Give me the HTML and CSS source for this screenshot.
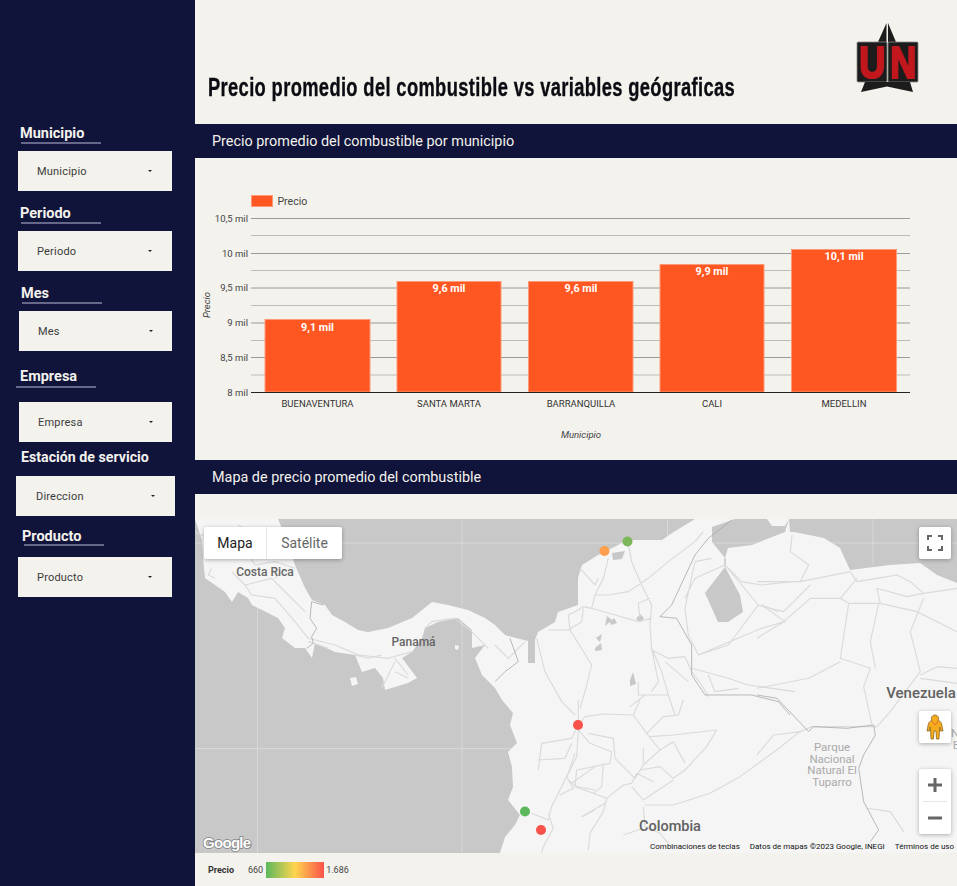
FILE: index.html
```html
<!DOCTYPE html>
<html lang="es">
<head>
<meta charset="utf-8">
<title>Precio promedio del combustible</title>
<link rel="stylesheet" href="styles.css">
</head>
<body>
<div class="page">
  <aside class="sidebar">
    <div class="filter f-municipio">
      <div class="f-label">Municipio</div><div class="f-rule"></div>
      <div class="f-select"><span>Municipio</span><i class="caret"></i></div>
    </div>
    <div class="filter f-periodo">
      <div class="f-label">Periodo</div><div class="f-rule"></div>
      <div class="f-select"><span>Periodo</span><i class="caret"></i></div>
    </div>
    <div class="filter f-mes">
      <div class="f-label">Mes</div><div class="f-rule"></div>
      <div class="f-select"><span>Mes</span><i class="caret"></i></div>
    </div>
    <div class="filter f-empresa">
      <div class="f-label">Empresa</div><div class="f-rule"></div>
      <div class="f-select"><span>Empresa</span><i class="caret"></i></div>
    </div>
    <div class="filter f-estacion">
      <div class="f-label">Estación de servicio</div>
      <div class="f-select"><span>Direccion</span><i class="caret"></i></div>
    </div>
    <div class="filter f-producto">
      <div class="f-label">Producto</div><div class="f-rule"></div>
      <div class="f-select"><span>Producto</span><i class="caret"></i></div>
    </div>
  </aside>
  <main class="main">
    <header class="head">
      <h1 class="title">Precio promedio del combustible vs variables geógraficas</h1>
      <svg class="logo" viewBox="0 0 66 74" width="66" height="74" aria-label="UN">
        <path class="logo-k" d="M30.500 1 L22 20 L30.500 20 Z M32 1 L40 20 L32 20 Z"/>
        <rect class="logo-box" x="1" y="20" width="30" height="40" rx="1"/>
        <rect class="logo-box" x="32" y="20" width="30" height="40" rx="1"/>
        <path class="logo-k" d="M9 60 L5 70 L31 64.500 L57 70 L54 60 Z"/>
        <text class="logo-t" x="3" y="55.500" textLength="26" lengthAdjust="spacingAndGlyphs">U</text>
        <text class="logo-t" x="34" y="55.500" textLength="26" lengthAdjust="spacingAndGlyphs">N</text>
      </svg>
    </header>
    <div class="bar">Precio promedio del combustible por municipio</div>
    <section class="chart">
      <svg class="chart-svg" viewBox="195 158 762 302" width="762" height="302">
        <rect class="bar-r" x="251.500" y="195.500" width="21" height="11"/>
        <text class="t-legend" x="277.500" y="205">Precio</text>
        <g class="grid-m">
          <path d="M251 235.500H910M251 270.500H910M251 305.500H910M251 340.500H910M251 375H910"/>
        </g>
        <g class="grid-j">
          <path d="M251 218.500H910M251 253.500H910M251 288H910M251 323H910M251 357.500H910"/>
        </g>
        <g class="t-tick">
          <text x="248" y="222">10,5 mil</text>
          <text x="248" y="257">10 mil</text>
          <text x="248" y="291">9,5 mil</text>
          <text x="248" y="326">9 mil</text>
          <text x="248" y="361">8,5 mil</text>
          <text x="248" y="396">8 mil</text>
        </g>
        <text class="t-axis t-mid" transform="translate(210 305) rotate(-90)">Precio</text>
        <rect class="bar-r" x="265" y="319.500" width="105" height="72.500"/>
        <rect class="bar-r" x="397" y="281.500" width="104" height="110.500"/>
        <rect class="bar-r" x="528.500" y="281.500" width="104.500" height="110.500"/>
        <rect class="bar-r" x="660" y="264.500" width="104" height="127.500"/>
        <rect class="bar-r" x="791.500" y="249.500" width="105" height="142.500"/>
        <path class="axis" d="M251 392.500H910"/>
        <g class="t-val">
          <text x="317.500" y="331">9,1 mil</text>
          <text x="449" y="292">9,6 mil</text>
          <text x="581" y="292">9,6 mil</text>
          <text x="712" y="275">9,9 mil</text>
          <text x="844" y="260">10,1 mil</text>
        </g>
        <g class="t-cat">
          <text x="317.500" y="407">BUENAVENTURA</text>
          <text x="449" y="407">SANTA MARTA</text>
          <text x="581" y="407">BARRANQUILLA</text>
          <text x="712" y="407">CALI</text>
          <text x="844" y="407">MEDELLIN</text>
        </g>
        <text class="t-axis t-mid" x="581" y="438">Municipio</text>
      </svg>
    </section>
    <div class="bar">Mapa de precio promedio del combustible</div>
    <section class="map-sec">
      <div class="map">
        <svg class="map-svg" viewBox="195 519 762 334" width="762" height="334">
          <rect class="water" x="195" y="519" width="762" height="334"/>
          <g class="geo">
          <path class="gridl" d="M195 543H957M195 748.500H520M257.500 519V853M462 519V853M667.500 519V545M873 519V565"/>
          <path class="land" d="M278 519L285 535L295 565L305 588L312 600L325 605L332 615L345 622L358 630L368 632L388 628L412 618L422 610L432 602L448 605L468 610L485 618L495 625L505 635L512 637L528 641L528 663L535 663L535 640L538 632L555 622L558 612L578 605L578 578L582 565L598 555L612 548L628 540L662 540L672 533L695 519L735 519L712 527L712 542L725 558L728 548L752 545L785 532L789 519L790 532L794 532L824 538L840 548L850 570L890 565L920 563L937 575L957 583L957 853L500 853L505 837L515 825L520 815L508 800L513 787L512 767L508 752L517 743L510 725L513 713L502 700L495 688L482 675L475 658L485 645L472 648L472 630L458 618L438 622L425 628L422 638L412 652L402 658L417 678L408 683L385 690L383 678L375 668L362 672L355 655L335 652L315 643L312 658L305 648L295 648L282 638L285 628L278 618L252 605L248 598L238 592L232 602L225 592L205 578L203 558L202 540L197 525L195 519Z"/>
          <path class="land" d="M350 678L356 677L358 684L352 686ZM455 645L459 646L458 650L455 649ZM767 519L789 519L785 526L772 526Z"/>
          <path class="water" d="M725 567L705 593L718 622L728 622L743 612L740 595ZM612 553L625 551L622 559L613 560ZM610 622L614 618L617 623L611 625ZM640 614L644 618L640 622L636 619ZM596 638L602 634L600 642ZM595 648L601 643L602 650L595 651ZM630 680L633 672L636 684L630 686ZM607 616L612 620L605 626Z"/>
          <path class="gridc" d="M725 558V567"/>
          <g class="roads" transform="translate(195 515) scale(.3333)">
            <path d="M110 170L150 210L230 190L280 240L330 290M150 210L170 240L240 250L300 320L340 370L420 390L490 420L580 430L650 410M240 190L260 170M0 50L80 90L130 70L180 150L240 140L300 160M340 380L400 400M480 420L520 430L560 420M600 430L640 480M690 340L710 320L780 310L830 350L880 400M50 160L40 180L60 190M130 30L180 60M560 520L600 440M640 490L600 470"/>
          </g>
          <path class="border" transform="translate(195 515) scale(.3333)" d="M350 260L345 310L365 340L350 365L355 385L335 400M350 260L385 270"/>
          <g class="roads" transform="translate(495 515) scale(.3333)">
            <path d="M400 85L410 140L440 210L470 270L465 330L470 400L500 470L520 540L540 600M340 130L325 190L300 240L290 280L265 275L240 290L220 300L225 345L250 385L290 450L270 530L255 580M300 240L340 240L400 230L460 190L520 140L600 80L625 50M290 280L360 300L430 320L470 310M160 345L220 345L260 320L265 280M125 370L150 470L200 560L240 600M470 405L520 430L570 425L590 470L620 510L640 545M650 130L600 140L570 280L580 360L610 420L700 390L790 270L690 150L600 190L570 250M610 420L800 340L870 320L800 270L850 290M590 460L700 490L760 510L900 530M690 150L740 200L800 210L890 200M430 265L435 310M430 265L465 250M430 500L430 540L520 540M405 575L450 540M255 160L300 210L310 190M0 390L40 430L90 380M470 400L490 500L470 530M510 440L580 500M640 480L660 530L730 520"/>
          </g>
          <path class="border" transform="translate(495 515) scale(.3333)" d="M495 305L530 270L600 120L640 70L710 15M495 305L545 310L590 390L590 480L630 540L770 540L850 560L885 600M0 500L30 470L70 440L45 370"/>
          <g class="roads" transform="translate(757 515) scale(.3333)">
            <path d="M0 200L130 200L280 170M105 60L100 110L155 150L130 200M300 190L250 250L160 250L80 320L0 370M160 210L80 290L0 270M250 250L275 265L370 265L360 220L450 245L500 235L600 220M370 265L480 290L600 350M275 265L250 430L340 460L320 515L345 630M365 265L340 380L355 460M500 250L460 350L490 470L400 590L360 635M250 440L155 490L0 520M490 480L540 455L600 460M490 490L600 505M360 635L165 635L130 650L50 660L0 720M330 880L400 890L440 950M280 170L300 200L360 190L420 180L460 200L500 235"/>
          </g>
          <path class="border" transform="translate(757 515) scale(.3333)" d="M0 540L60 550L155 650L170 635L270 640L350 630L355 660L320 720L305 760L320 860L365 945L340 980"/>
          <g class="roads" transform="translate(560 700) scale(.3333)">
            <path d="M55 75L75 50L130 42L220 45L260 100L300 150L250 195L225 235L165 175L160 115L85 100M220 45L240 0M260 100L310 50L355 45L370 0M270 110L340 105L470 90L440 140L375 210L340 235L300 200L240 210M340 125L375 190M300 150L340 125M55 90L90 130L155 155L150 190L50 210L45 260L100 280L140 295L190 255L215 250L230 220M130 190L125 260L100 280M250 145L250 190M215 260L250 300L340 240M255 315L340 315L450 280L540 230L650 150L720 95M140 295L130 335L90 400L85 450M135 310L65 350M250 320L255 380L300 400L325 430M190 405L250 385M55 90L50 170L20 230L40 265L0 285M230 220L280 245"/>
          </g>
          <g class="roads" transform="translate(195 700) scale(.3333)">
            <path d="M1150 75L1130 115L1040 130L1030 210M1030 180L1110 175L1130 130M1140 160L1120 220L1070 320L1060 360L1010 340M1060 340L1075 385L1045 440L1040 459M1130 250L1200 200M1160 350L1200 330M1150 0L1150 75M1120 240L1145 260L1200 270"/>
          </g>
          </g>
          <g class="m-lab">
            <text x="265" y="576">Costa Rica</text>
            <text x="413.500" y="646">Panamá</text>
          </g>
          <g class="m-big">
            <text x="921" y="698">Venezuela</text>
            <text x="670" y="831">Colombia</text>
          </g>
          <g class="m-park">
            <text x="832" y="751">Parque</text>
            <text x="832" y="762.500">Nacional</text>
            <text x="832" y="774">Natural El</text>
            <text x="832" y="785.500">Tuparro</text>
            <text x="955" y="737">N</text>
            <text x="956" y="749">E</text>
          </g>
          <circle class="dot-g2" cx="627.500" cy="541.500" r="5"/>
          <circle class="dot-o" cx="604.500" cy="551" r="5"/>
          <circle class="dot-r" cx="578" cy="725" r="5"/>
          <circle class="dot-g" cx="525" cy="811.500" r="5"/>
          <circle class="dot-r" cx="541" cy="830" r="5"/>
        </svg>
        <div class="maptype"><span class="mt-on">Mapa</span><span class="mt-off">Satélite</span></div>
        <button class="mbtn m-full" aria-label="Pantalla completa">
          <svg viewBox="0 0 18 18" width="18" height="18"><path class="ic" d="M2 6V2H6M12 2H16V6M16 12V16H12M6 16H2V12"/></svg>
        </button>
        <button class="mbtn m-peg" aria-label="Pegman">
          <svg viewBox="0 0 18 26" width="18" height="26"><path class="peg" d="M9 1a3.500 3.500 0 0 1 3 5.500c2 .5 3 1.500 3.500 3L17 17h-2.500l-.8-4-.7 12h-2.500L10 17H8l-.5 8H5l-.7-12-.8 4H1l1.500-7.500C3 8 4 7 6 6.500A3.500 3.500 0 0 1 9 1z"/><path class="peg-n" d="M6 7l3 4 3-4"/></svg>
        </button>
        <div class="mbtn m-zoom">
          <svg viewBox="0 0 32 32" width="32" height="32"><path class="zm" d="M9 16H23M16 9V23"/></svg>
          <i class="zsep"></i>
          <svg viewBox="0 0 32 32" width="32" height="32"><path class="zm" d="M9 16H23"/></svg>
        </div>
        <div class="google">Google</div>
        <div class="attr"><span>Combinaciones de teclas</span><span>Datos de mapas ©2023 Google, INEGI</span><span>Términos de uso</span></div>
      </div>
      <div class="legend">
        <b>Precio</b><span class="l-min">660</span><i class="l-grad"></i><span>1.686</span>
      </div>
    </section>
  </main>
</div>
</body>
</html>
```

FILE: styles.css
```css
* { box-sizing: border-box; }
html, body { margin: 0; padding: 0; }
body { width: 957px; height: 886px; overflow: hidden; font-family: Roboto, "Liberation Sans", sans-serif; background: #f3f2ec; }
.page { display: flex; width: 957px; height: 886px; }

/* sidebar */
.sidebar { width: 195px; flex: none; background: #10133a; padding-top: 124px; }
.f-label { height: 18px; line-height: 20px; font-size: 14.500px; font-weight: 700; color: #f3f2ec; white-space: nowrap; }
.f-rule { width: 80px; height: 2px; background: #66688a; }
.f-select { display: flex; align-items: center; justify-content: space-between; height: 40px; background: #f3f2ec; font-size: 11px; letter-spacing: .2px; color: #3c3c3c; }
.caret { width: 0; height: 0; border: 2.500px solid transparent; border-top: 2.500px solid #222; border-bottom: 0; }

.f-municipio { padding-left: 18px; width: 172px; }
.f-municipio .f-label { margin-left: 2px; }
.f-municipio .f-rule { margin-left: 3px; }
.f-municipio .f-select { margin-top: 7px; padding: 0 20px 0 19px; }

.f-periodo { margin-top: 13px; padding-left: 18px; width: 172px; }
.f-periodo .f-label { margin-left: 2px; }
.f-periodo .f-rule { margin-left: 3px; }
.f-periodo .f-select { margin-top: 7px; padding: 0 20px 0 19px; }

.f-mes { margin-top: 13px; padding-left: 19px; width: 172px; }
.f-mes .f-label { margin-left: 2px; }
.f-mes .f-rule { margin-left: 3px; }
.f-mes .f-select { margin-top: 7px; padding: 0 19px; }

.f-empresa { margin-top: 16px; padding-left: 19px; width: 172px; }
.f-empresa .f-label { margin-left: 1px; }
.f-empresa .f-rule { margin-left: -3px; margin-top: 1px; }
.f-empresa .f-select { margin-top: 14px; padding: 0 19px; }

.f-estacion { margin-top: 5px; padding-left: 16px; width: 175px; }
.f-estacion .f-label { margin-left: 5px; font-size: 14.200px; }
.f-estacion .f-select { margin-top: 11px; padding: 0 20px; }

.f-producto { margin-top: 11px; padding-left: 18px; width: 172px; }
.f-producto .f-label { margin-left: 4px; }
.f-producto .f-rule { margin-left: 6px; margin-top: -1px; }
.f-producto .f-select { margin-top: 11px; padding: 0 20px 0 19px; }

/* main */
.main { flex: 1; min-width: 0; display: flex; flex-direction: column; }
.head { height: 124px; position: relative; padding: 72px 0 0 13px; }
.title { display: inline-block; margin: 0; font-family: "Liberation Sans", sans-serif; font-size: 26px; line-height: 30px; font-weight: 700; letter-spacing: .5px; color: #0b0b12; -webkit-text-stroke: .35px #0b0b12; white-space: nowrap; transform: scaleX(.705); transform-origin: left center; }
.logo { position: absolute; left: 661px; top: 22px; }
.logo-k { fill: #1c1c1c; }
.logo-box { fill: #1c1c1c; stroke: #8c8c86; stroke-width: .8; }
.logo-t { font-family: "Liberation Sans", sans-serif; font-weight: 700; font-size: 45px; fill: #c1171d; stroke: #c1171d; stroke-width: 2.200; }
.bar { height: 34px; line-height: 35px; padding-left: 17px; background: #10133a; color: #f3f2ec; font-size: 14.400px; }

/* chart */
.chart { height: 302px; }
.chart-svg { display: block; }
.bar-r { fill: #ff5722; stroke: #ff9a78; stroke-width: 1; }
.grid-m path { stroke: #bdbcb6; stroke-width: 1; fill: none; }
.grid-j path { stroke: #9a9a96; stroke-width: 1; fill: none; }
.axis { stroke: #222; stroke-width: 1; fill: none; }
.t-legend { font-size: 10.500px; fill: #444; }
.t-tick text { font-size: 9.500px; fill: #444; text-anchor: end; }
.t-axis { font-size: 9.500px; font-style: italic; fill: #444; }
.t-mid { text-anchor: middle; }
.t-val text { font-size: 10.800px; font-weight: 700; fill: #fff; text-anchor: middle; }
.t-cat text { font-size: 9.500px; fill: #333; text-anchor: middle; }

/* map */
.map-sec { flex: 1; padding-top: 25px; display: flex; flex-direction: column; }
.map { position: relative; width: 762px; height: 334px; overflow: hidden; }
.map-svg { display: block; }
.geo { filter: blur(.5px); }
.water { fill: #c8c8c8; }
.land { fill: #f5f5f5; }
.gridl { stroke: #d8d8d8; stroke-width: 1; fill: none; }
.gridc { stroke: #c8c8c8; stroke-width: 1.500; fill: none; }
.roads path { fill: none; stroke: #dadada; stroke-width: 3.400; stroke-linejoin: round; }
.border { fill: none; stroke: #a8a8a8; stroke-width: 2.400; stroke-linejoin: round; }
.m-lab text { font-size: 12px; font-weight: 500; fill: #666; text-anchor: middle; }
.m-big text { font-size: 15px; font-weight: 500; fill: #616161; text-anchor: middle; }
.m-big text + text { font-size: 14.500px; }
.m-park text { font-size: 11.500px; fill: #aaa; text-anchor: middle; }
.dot-g { fill: #5cb85c; }
.dot-g2 { fill: #7cb85a; }
.dot-o { fill: #ff9e4d; }
.dot-r { fill: #f9524a; }

.maptype { position: absolute; left: 9px; top: 8px; height: 32px; display: flex; background: #fff; border-radius: 2px; box-shadow: 0 1px 4px rgba(0,0,0,.3); font-size: 14px; line-height: 32px; }
.mt-on { width: 63px; text-align: center; color: #222; border-right: 1px solid #e6e6e6; }
.mt-off { width: 75px; text-align: center; color: #666; }
.mbtn { position: absolute; left: 724px; width: 32px; background: #fff; border: 0; padding: 0; border-radius: 2px; box-shadow: 0 1px 4px rgba(0,0,0,.3); display: flex; align-items: center; justify-content: center; }
.m-full { top: 8px; height: 32px; }
.m-peg { top: 192px; height: 32px; }
.m-zoom { top: 250px; height: 65px; flex-direction: column; }
.zsep { width: 24px; height: 1px; background: #e6e6e6; flex: none; }
.ic { fill: none; stroke: #666; stroke-width: 2; }
.zm { fill: none; stroke: #666; stroke-width: 3; }
.peg { fill: #f6ab1e; stroke: #8a6a20; stroke-width: .8; }
.peg-n { fill: none; stroke: #e8702a; stroke-width: 1; }
.google { position: absolute; left: 8px; bottom: 2px; font-family: "Liberation Sans", sans-serif; font-size: 15px; font-weight: 700; color: #fff; letter-spacing: -.7px; -webkit-text-stroke: 1.600px #808080; paint-order: stroke fill; }
.attr { position: absolute; right: 3px; bottom: 1px; display: flex; gap: 10px; font-size: 8px; line-height: 10px; color: #111; white-space: nowrap; }

.legend { height: 33px; display: flex; align-items: center; padding-left: 13px; font-size: 9px; color: #444; }
.legend b { color: #333; font-weight: 700; width: 40px; }
.l-min { margin-right: 3px; }
.l-grad { width: 58px; height: 16px; margin-right: 2px; background: linear-gradient(90deg, #5cb85c, #ffd54f 50%, #f9524a); }
```
